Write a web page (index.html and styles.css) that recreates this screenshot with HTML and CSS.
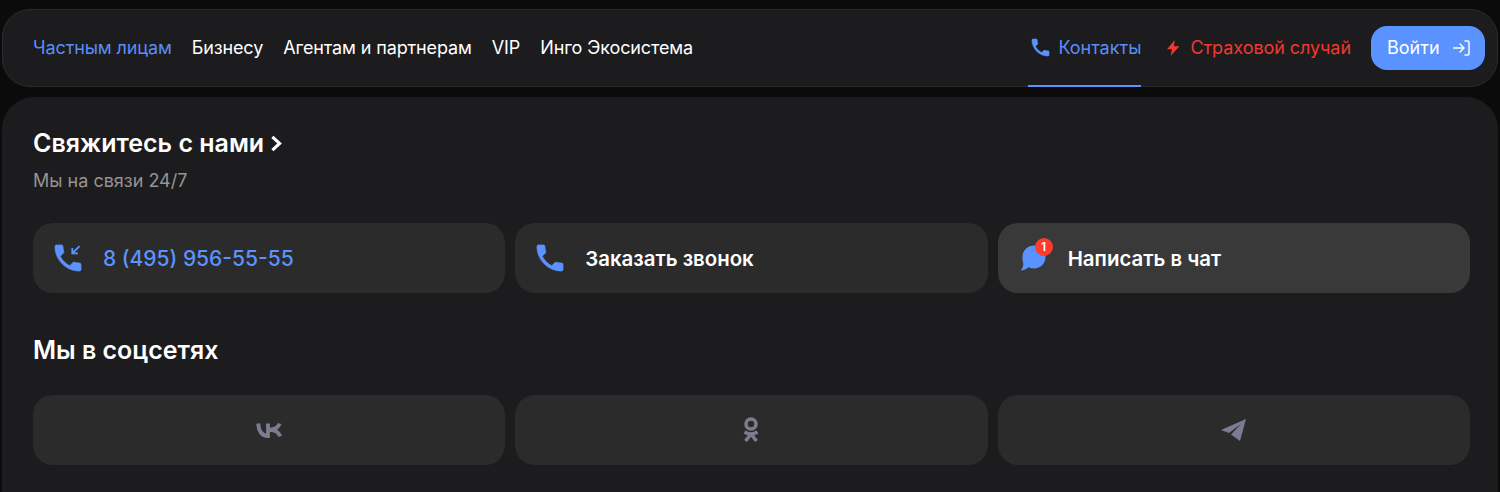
FILE: index.html
```html
<!DOCTYPE html>
<html>
<head>
    <meta charset="utf-8">
    <title>Контакты</title>
    <link rel="stylesheet" href="styles.css">
</head>
<body>
    <header class="topbar">
        <nav class="nav-left">
            <a class="nav-link active" href="#">Частным лицам</a>
            <a class="nav-link" href="#">Бизнесу</a>
            <a class="nav-link" href="#">Агентам и партнерам</a>
            <a class="nav-link" href="#">VIP</a>
            <a class="nav-link" href="#">Инго Экосистема</a>
        </nav>
        <div class="nav-right">
            <a class="contacts-link" href="#">
                <svg class="icon-nav" viewBox="3 3 18 18"><path d="M6.62 10.79c1.44 2.83 3.76 5.14 6.59 6.59l2.2-2.2c.27-.27.67-.36 1.02-.24 1.12.37 2.33.57 3.57.57.55 0 1 .45 1 1V20c0 .55-.45 1-1 1-9.39 0-17-7.61-17-17 0-.55.45-1 1-1h3.5c.55 0 1 .45 1 1 0 1.25.2 2.45.57 3.57.11.35.03.74-.25 1.02l-2.2 2.2z"/></svg>
                Контакты
            </a>
            <a class="claim-link" href="#">
                <svg class="icon-bolt" viewBox="0 0 14 16"><path d="M8.6 0L1 9.2h5L4.6 16 13.4 6.2H8z"/></svg>
                Страховой случай
            </a>
            <a class="login-btn" href="#">
                Войти
                <svg class="icon-login" viewBox="0 0 18 16"><path d="M1 8h10M7.500 3.600L12 8l-4.500 4.400M12.500 1H16a1 1 0 0 1 1 1v12a1 1 0 0 1-1 1h-3.500"/></svg>
            </a>
        </div>
    </header>

    <main class="panel">
        <h2 class="title">Свяжитесь с нами
            <svg class="icon-chevron" viewBox="0 0 10 14"><path d="M2 1.500L8 7l-6 5.500"/></svg>
        </h2>
        <p class="subtitle">Мы на связи 24/7</p>

        <div class="card-row">
            <a class="card" href="#">
                <svg class="icon-card" viewBox="3 3 18 18">
                    <path d="M20 15.500c-1.250 0-2.450-.2-3.570-.57-.35-.11-.74-.03-1.020.24l-2.200 2.200c-2.830-1.440-5.150-3.750-6.590-6.580l2.200-2.210c.28-.27.36-.66.25-1.010C8.700 6.450 8.500 5.250 8.500 4c0-.55-.45-1-1-1H4c-.55 0-1 .45-1 1 0 9.390 7.610 17 17 17 .55 0 1-.45 1-1v-3.500c0-.55-.45-1-1-1z"/>
                    <path class="arrow" d="M20 3.800l-5 5M15 5v3.800h3.900"/>
                </svg>
                <span class="card-phone">8 (495) 956-55-55</span>
            </a>
            <a class="card" href="#">
                <svg class="icon-card" viewBox="3 3 18 18"><path d="M6.620 10.790c1.440 2.830 3.760 5.140 6.590 6.590l2.200-2.200c.27-.27.67-.36 1.020-.24 1.120.37 2.330.57 3.570.57.55 0 1 .45 1 1V20c0 .55-.45 1-1 1-9.390 0-17-7.610-17-17 0-.55.45-1 1-1h3.500c.55 0 1 .45 1 1 0 1.250.2 2.450.57 3.570.11.35.03.74-.25 1.020l-2.200 2.200z"/></svg>
                <span class="card-text">Заказать звонок</span>
            </a>
            <a class="card card-hover" href="#">
                <span class="chat-icon">
                    <svg class="icon-chat" viewBox="0 0 26 26"><path d="M14 0.500C20.400 0.500 25.500 5.600 25.500 12S20.400 23.500 14 23.500c-1.900 0-3.700-.45-5.300-1.300C6.500 24.200 3.300 25.500 .6 25.500c1.500-1.800 2.600-3.900 2.800-6.700C2.800 17.200 2.500 14.700 2.500 12 2.500 5.600 7.600 .5 14 .5z"/></svg>
                    <span class="badge">1</span>
                </span>
                <span class="card-text">Написать в чат</span>
            </a>
        </div>

        <h2 class="title title-social">Мы в соцсетях</h2>

        <div class="card-row">
            <a class="card card-social" href="#">
                <svg class="icon-vk" viewBox="0 0 26 16"><path d="M2.200 1.500c.5 7 3.400 12.500 9.800 12.500V1.500M23.500 1.500c-1 4.500-5 6.300-11.500 6.300 6.500 0 10.800 1.800 12.300 6.500"/></svg>
            </a>
            <a class="card card-social" href="#">
                <svg class="icon-ok" viewBox="0 0 16 26"><circle cx="8" cy="7" r="5"/><path d="M1.500 15c4 2.500 9 2.500 13 0M8 17L2.500 24M8 17l5.500 7"/></svg>
            </a>
            <a class="card card-social" href="#">
                <svg class="icon-tg" viewBox="0 0 25 22"><path d="M25 0L0 11l8 3L20 5 10 15.500 19 22z"/></svg>
            </a>
        </div>
    </main>
</body>
</html>
```

FILE: styles.css
```css
* {
    box-sizing: border-box;
}

html, body {
    height: 492px;
    overflow: hidden;
}

body {
    margin: 0;
    padding: 9px 2px 0;
    background-color: #0b0b0c;
    font-family: "Inter", "Noto Sans", sans-serif;
    color: #fff;
}

a {
    text-decoration: none;
    color: inherit;
}

.topbar {
    display: flex;
    justify-content: space-between;
    align-items: center;
    height: 78px;
    padding: 0 12px 0 30px;
    background-color: #1c1c1e;
    border: 1px solid #2b2b2d;
    border-radius: 28px;
}

.nav-left {
    display: flex;
    gap: 20px;
    margin-bottom: 2px;
}

.nav-link {
    font-size: 18px;
    letter-spacing: -0.12px;
    color: #fff;
}

.nav-link.active {
    color: #5a8df5;
}

.nav-right {
    display: flex;
    align-items: center;
    height: 100%;
}

.contacts-link {
    display: flex;
    align-items: center;
    gap: 9px;
    height: 100%;
    margin-bottom: -1px;
    padding-left: 4px;
    font-size: 18px;
    color: #5a8df5;
    border-bottom: 2px solid #5a93ff;
}

.icon-nav {
    width: 17px;
    height: 17px;
    overflow: visible;
    fill: #5a93ff;
    stroke: #5a93ff;
    stroke-width: 0.6;
}

.claim-link {
    display: flex;
    align-items: center;
    gap: 10px;
    margin-left: 25px;
    margin-bottom: 1px;
    font-size: 18px;
    letter-spacing: -0.06px;
    color: #f0392f;
}

.icon-bolt {
    width: 14px;
    height: 16px;
    fill: #f0392f;
}

.login-btn {
    display: flex;
    align-items: center;
    justify-content: space-between;
    width: 114px;
    height: 44px;
    margin-left: 20px;
    padding: 0 15px 1px 16px;
    background-color: #5a93ff;
    border-radius: 16px;
    font-size: 18px;
}

.icon-login {
    width: 18px;
    height: 16px;
    fill: none;
    stroke: #fff;
    stroke-width: 1.4;
}

.panel {
    height: 395px;
    margin-top: 10px;
    padding: 31px 28px 0 31px;
    background-color: #1c1c1e;
    border-radius: 32px 32px 0 0;
}

.title {
    display: flex;
    align-items: center;
    gap: 6px;
    margin: 0;
    height: 30px;
    font-size: 25px;
    font-weight: 600;
}

.icon-chevron {
    width: 12px;
    height: 17px;
    fill: none;
    stroke: #fff;
    stroke-width: 2.6;
}

.subtitle {
    margin: 12px 0 0;
    height: 22px;
    font-size: 18px;
    color: #949494;
}

.card-row {
    display: grid;
    grid-template-columns: repeat(3, 1fr);
    gap: 10px;
    margin-top: 31px;
}

.card {
    display: flex;
    align-items: center;
    gap: 22px;
    height: 70px;
    padding: 0 22px;
    background-color: #2b2b2c;
    border-radius: 20px;
}

.card-hover {
    background-color: #39393a;
}

.icon-card {
    display: block;
    width: 26px;
    height: 26px;
    overflow: visible;
    fill: #5a93ff;
    stroke: #5a93ff;
    stroke-width: 0.5;
}

.icon-chat {
    display: block;
    width: 26px;
    height: 26px;
    fill: #5a93ff;
}

.arrow {
    fill: none;
    stroke: #5a93ff;
    stroke-width: 1.3;
}

.card-text {
    font-size: 20.4px;
    font-weight: 600;
}

.card-phone {
    font-size: 21px;
    font-weight: 500;
    color: #5a93ff;
}

.chat-icon {
    position: relative;
}

.badge {
    position: absolute;
    top: -7px;
    right: -7px;
    width: 18px;
    height: 18px;
    background-color: #ff3b30;
    border-radius: 50%;
    font-size: 12px;
    font-weight: 600;
    line-height: 18px;
    text-align: center;
}

.title-social {
    margin-top: 42px;
}

.title-social + .card-row {
    margin-top: 30px;
}

.card-social {
    justify-content: center;
}

.icon-vk {
    width: 26px;
    height: 16px;
    fill: none;
    stroke: #7a7d8f;
    stroke-width: 3.8;
}

.icon-ok {
    width: 16px;
    height: 26px;
    fill: none;
    stroke: #7a7d8f;
    stroke-width: 3.6;
}

.icon-tg {
    width: 25px;
    height: 22px;
    fill: #7a7d8f;
}
```
